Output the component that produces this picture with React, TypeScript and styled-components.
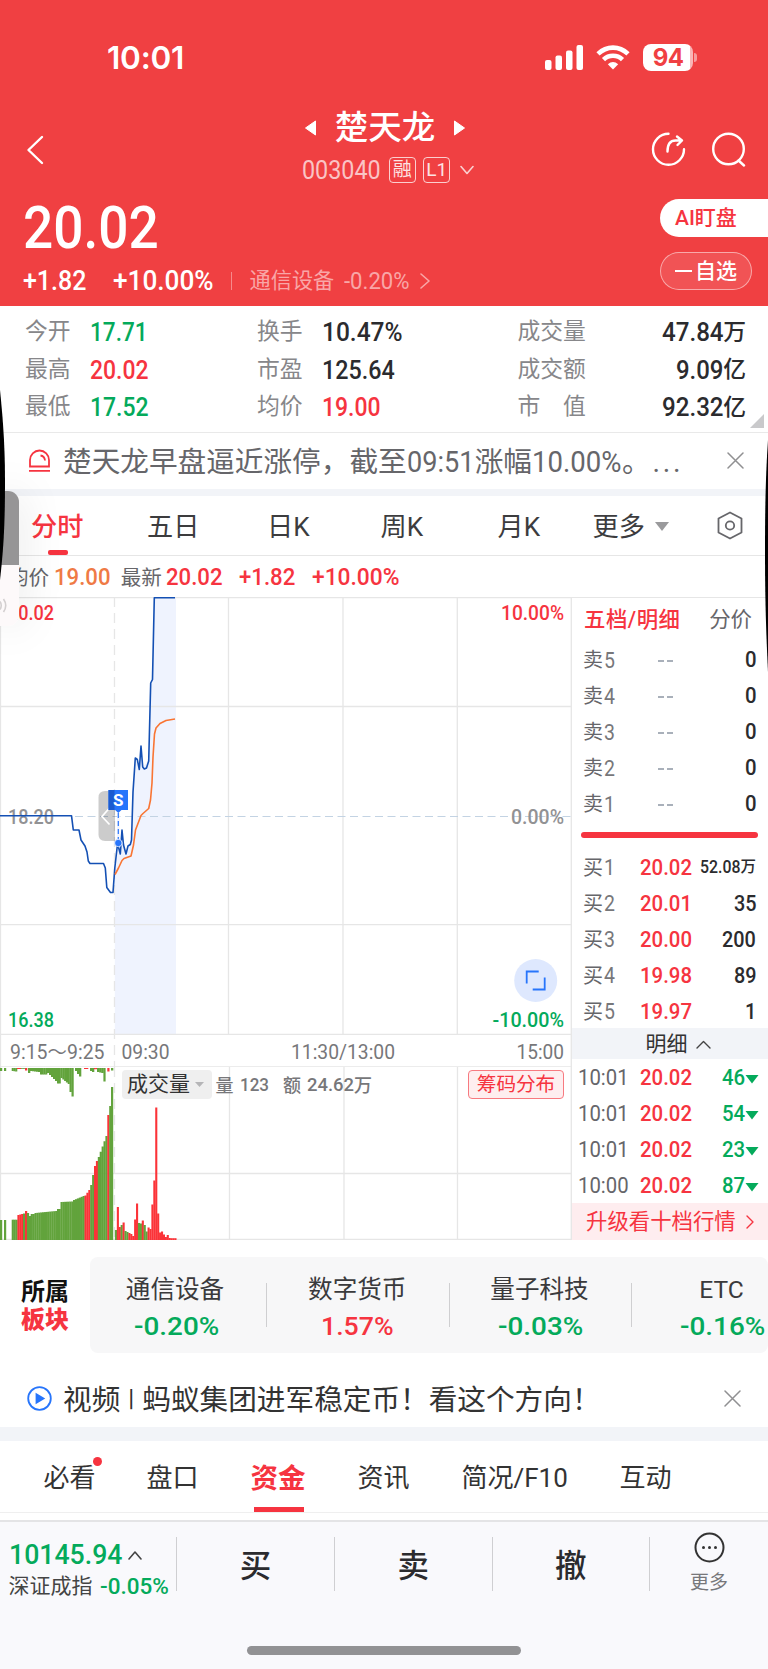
import React from "react";
import styled, { createGlobalStyle } from "styled-components";

const RED = "#f63440";
const GREEN = "#04aa5b";
const INK = "#2b2b2e";
const FONT = 'Roboto, "Noto Sans CJK SC", sans-serif';

const Global = createGlobalStyle`
  * { box-sizing: border-box; }
  body { margin: 0; background: #fff; font-family: ${FONT}; line-height: 1; }
  svg { display: block; flex: none; }
`;

/* ---------- condensed numerals ---------- */

const ADVANCE: Record<string, number> = { ".": 0.27, "%": 0.735, "+": 0.56, "-": 0.28, ":": 0.25 };
const advance = (t: string) => [...t].reduce((sum, c) => sum + (ADVANCE[c] ?? 0.5645), 0);

const NumBox = styled.span<{ $w: number; $size: number; $c: string; $b: number }>`
  display: inline-block;
  flex: none;
  width: ${(p) => p.$w}px;
  height: ${(p) => p.$size}px;
  font-size: ${(p) => p.$size}px;
  line-height: ${(p) => p.$size}px;
  font-weight: ${(p) => p.$b};
  color: ${(p) => p.$c};
  white-space: nowrap;
`;
const NumInk = styled.span<{ $k: number }>`
  display: inline-block;
  transform: scaleX(${(p) => p.$k});
  transform-origin: 0 50%;
`;

function Num({ t, w, size, c = INK, b = 500 }: { t: string; w: number; size: number; c?: string; b?: number }) {
  return (
    <NumBox $w={w} $size={size} $c={c} $b={b}>
      <NumInk $k={w / (advance(t) * size)}>{t}</NumInk>
    </NumBox>
  );
}

/* ---------- page and header ---------- */

const Page = styled.div`
  position: relative;
  width: 768px;
  height: 1669px;
  overflow: hidden;
  background: #fff;
  display: flex;
  flex-direction: column;
`;
const Header = styled.header`
  height: 306px;
  flex: none;
  background: #f04042;
  color: #fff;
`;
const StatusBar = styled.div`
  height: 106px;
  padding: 8px 71px 0 107px;
  display: flex;
  align-items: center;
  justify-content: space-between;
`;
const Clock = styled.span`
  padding-top: 1px;
  font: 600 31.5px/1 Inter, sans-serif;
  letter-spacing: -0.2px;
`;
const StatusIcons = styled.div`
  display: flex;
  align-items: center;
  gap: 13px;
`;
const Battery = styled.div`
  display: flex;
  align-items: center;
  gap: 1px;
  &::after {
    content: "";
    width: 3px;
    height: 9px;
    border-radius: 0 4px 4px 0;
    background: #f79b9c;
  }
`;
const BatteryLevel = styled.span`
  width: 50px;
  height: 27px;
  border-radius: 8px;
  background: linear-gradient(90deg, #fff 47px, #f9b5b6 47px);
  color: #f04042;
  font: 700 24px/27px Inter, sans-serif;
  letter-spacing: -0.6px;
  text-align: center;
`;
const NavBar = styled.div`
  height: 87px;
  padding: 0 22.5px 0 25.5px;
  display: grid;
  grid-template-columns: 100px 1fr 100px;
  align-items: center;
`;
const NavTitle = styled.div`
  display: flex;
  flex-direction: column;
`;
const NameRow = styled.div`
  height: 42px;
  padding: 0 1px 1px 0;
  display: flex;
  align-items: center;
  justify-content: center;
  gap: 19px;
`;
const StockName = styled.h1`
  margin: 0;
  font-size: 33.5px;
  font-weight: 500;
  line-height: 40px;
`;
const CodeRow = styled.div`
  height: 42px;
  padding: 0 0 1px 5px;
  display: flex;
  align-items: center;
  justify-content: center;
`;
const Tag = styled.span<{ $ml: number }>`
  width: 27px;
  height: 26px;
  margin-left: ${(p) => p.$ml}px;
  border: 1.5px solid rgba(255, 255, 255, 0.75);
  border-radius: 4px;
  font-size: 19px;
  line-height: 24px;
  text-align: center;
  color: #fde3e3;
`;
const NavActions = styled.div`
  display: flex;
  justify-content: flex-end;
  gap: 26px;
`;
const Quote = styled.div`
  display: flex;
  justify-content: space-between;
`;
const QuoteMain = styled.div`
  padding-left: 22.5px;
`;
const PriceRow = styled.div`
  height: 70px;
  display: flex;
  align-items: center;
`;
const ChangeRow = styled.div`
  height: 36px;
  display: flex;
  align-items: center;
`;
const ChangeGap = styled.span`
  width: 27px;
`;
const Sector = styled.div`
  margin-left: 18px;
  padding-left: 18px;
  display: flex;
  align-items: center;
  gap: 10px;
  font-size: 21.2px;
  color: #f9a6a7;
  border-left: 1.5px solid #f68a8b;
  height: 18px;
`;
const QuoteActions = styled.div`
  width: 108px;
  padding-top: 6px;
  display: flex;
  flex-direction: column;
  gap: 15px;
`;
const WatchAi = styled.button`
  height: 38px;
  padding: 0 0 0 15px;
  border: 0;
  border-radius: 19px 0 0 19px;
  background: #fff;
  color: ${RED};
  font: 500 21px/38px ${FONT};
  text-align: left;
`;
const FavButton = styled.button`
  width: 92px;
  height: 38px;
  padding: 0 0 0 14px;
  border: 1px solid rgba(255, 255, 255, 0.5);
  border-radius: 19px;
  background: rgba(255, 255, 255, 0.1);
  color: #fff;
  font: 500 21px/37px ${FONT};
  display: flex;
  align-items: center;
  gap: 3px;
  &::before {
    content: "";
    width: 17px;
    height: 2.5px;
    background: #fff;
  }
`;

/* ---------- statistics ---------- */

const Stats = styled.section`
  position: relative;
  height: 126.5px;
  padding: 7.5px 22px 0 25px;
  border-bottom: 1.5px solid #e9e9e9;
  flex: none;
`;
const StatRow = styled.div`
  height: 37.6px;
  display: grid;
  grid-template-columns: 64.5px 167.5px 64.5px 196px 70px 1fr;
  align-items: center;
  font-size: 22.8px;
  color: #87878a;
`;
const StatLabel = styled.span`
  line-height: 24px;
`;
const StatNum = styled.span<{ $end?: boolean }>`
  display: flex;
  align-items: center;
  color: ${INK};
  font-weight: 500;
  ${(p) => p.$end && "justify-content: flex-end;"}
`;
const Unit = styled.span`
  padding-top: 2px;
`;
const Corner = styled.i`
  position: absolute;
  right: 4px;
  bottom: 4px;
  border: solid transparent;
  border-width: 0 0 14px 14px;
  border-bottom-color: #c9c9cb;
`;

/* ---------- banners ---------- */

const Banner = styled.div<{ $h: number; $c: string; $band: number; $pr: number }>`
  height: ${(p) => p.$h}px;
  flex: none;
  padding: 0 ${(p) => p.$pr}px 0 27px;
  display: flex;
  align-items: center;
  font-size: 28.65px;
  color: ${(p) => p.$c};
  border-bottom: ${(p) => p.$band}px solid #f2f4f8;
`;
const BannerText = styled.span`
  display: flex;
  align-items: center;
  margin: 3px auto 0 11px;
  white-space: pre;
`;
const Ellipsis = styled.span`
  letter-spacing: 2.6px;
  margin-left: 2px;
`;
const Bar = styled.span`
  font-size: 22px;
`;

/* ---------- chart tabs ---------- */

const ChartTabs = styled.nav`
  position: relative;
  height: 59.5px;
  flex: none;
  padding-left: 31px;
  border-bottom: 1.5px solid #e6e6e6;
  display: grid;
  grid-template-columns: 116px 120px 113.5px 117px 95px 124px 1fr;
  align-items: center;
  font-size: 26.2px;
  color: #3c3c3e;
`;
const ChartTab = styled.span<{ $on?: boolean }>`
  position: relative;
  height: 100%;
  padding-top: 3px;
  display: flex;
  align-items: center;
  gap: 10px;
  ${(p) =>
    p.$on &&
    `color: ${RED}; font-weight: 500;
    &::after { content: ""; position: absolute; left: 17px; bottom: 0; width: 20px; height: 5px; border-radius: 2px; background: ${RED}; }`}
`;
const InfoRow = styled.div`
  height: 41px;
  flex: none;
  padding: 4px 0 0 8px;
  display: flex;
  align-items: center;
  font-size: 20.6px;
  color: #66666a;
`;
const InfoGap = styled.span<{ $w: number }>`
  flex: none;
  width: ${(p) => p.$w}px;
`;

/* ---------- chart and order book ---------- */

const Market = styled.section`
  height: 643px;
  flex: none;
  display: grid;
  grid-template-columns: 572px 196px;
`;
const Charts = styled.div`
  position: relative;
`;
const VolumeSelect = styled.div`
  position: absolute;
  left: 122px;
  top: 473px;
  width: 90px;
  height: 29px;
  padding-left: 5px;
  border-radius: 4px;
  background: #efefef;
  display: flex;
  align-items: center;
  gap: 5px;
  font-size: 21px;
  color: #333;
`;
const ChipButton = styled.button`
  position: absolute;
  left: 468px;
  top: 473px;
  width: 96px;
  height: 29px;
  padding: 0;
  border: 1.5px solid #f77a80;
  border-radius: 4px;
  background: #feeeef;
  color: ${RED};
  font: 400 19.6px/28px ${FONT};
`;
const Book = styled.aside`
  display: flex;
  flex-direction: column;
  border-top: 1px solid #e6e6e6;
`;
const BookTabs = styled.div`
  height: 44px;
  flex: none;
  padding: 0 16px 0 12px;
  display: flex;
  align-items: center;
  justify-content: space-between;
  font-size: 21.4px;
  color: #66666a;
  b { color: ${RED}; font-weight: 500; letter-spacing: 0.5px; }
`;
const BookRow = styled.div`
  height: 36px;
  flex: none;
  padding: 1px 12px 0 11px;
  display: grid;
  grid-template-columns: 56.5px 50px 1fr;
  align-items: center;
  font-size: 20px;
  color: #66666a;
`;
const Level = styled.span`
  display: flex;
  align-items: center;
  gap: 1px;
`;
const Dashes = styled.span`
  display: flex;
  gap: 2.5px;
  padding: 1px 0 0 18px;
  &::before, &::after {
    content: "";
    width: 6.5px;
    height: 2px;
    background: #a9b0ba;
  }
`;
const Right = styled.span`
  display: flex;
  align-items: center;
  justify-content: flex-end;
  color: ${INK};
  font-size: 15.5px;
  font-weight: 500;
  svg { margin-top: 2px; }
`;
const Ratio = styled.div`
  height: 6px;
  margin: 10px 10px 11.5px 9px;
  border-radius: 3px;
  background: ${RED};
  flex: none;
`;
const DetailHead = styled.div`
  height: 31px;
  flex: none;
  margin-top: -1px;
  padding: 1px 0 0 16px;
  background: #f2f4f8;
  display: flex;
  align-items: center;
  justify-content: center;
  gap: 8px;
  font-size: 21px;
  color: #333;
`;
const TradeRow = styled.div`
  height: 36px;
  flex: none;
  padding: 2px 9px 0 6px;
  display: grid;
  grid-template-columns: 62px 52px 1fr;
  align-items: center;
`;
const Upgrade = styled.div`
  flex: 1;
  padding: 1px 0 0 14px;
  background: #feedef;
  display: flex;
  align-items: center;
  gap: 10px;
  font-size: 21.4px;
  color: ${RED};
`;

/* ---------- sectors ---------- */

const Sectors = styled.section`
  height: 131px;
  flex: none;
  padding: 17px 0 17.5px 21px;
  display: flex;
`;
const SectorsLabel = styled.div`
  width: 69px;
  padding-top: 21px;
  font-size: 24px;
  font-weight: 700;
  line-height: 28px;
  color: #111;
  b { display: block; color: ${RED}; }
`;
const SectorStrip = styled.div`
  flex: 1;
  overflow: hidden;
  border-radius: 8px;
  background: #f7f7f8;
  display: flex;
`;
const SectorCell = styled.div<{ $w: number }>`
  position: relative;
  flex: none;
  width: ${(p) => p.$w}px;
  padding: 21px 2px 0 0;
  display: flex;
  flex-direction: column;
  align-items: center;
  gap: 10.5px;
  font-size: 24.6px;
  color: #3a3a3c;
  &:first-child { padding-right: 7px; }
  &:not(:last-child)::after {
    content: "";
    position: absolute;
    right: 0;
    top: 26px;
    width: 1px;
    height: 44px;
    background: #cfcfd1;
  }
`;

/* ---------- page tabs and bottom bar ---------- */

const PageTabs = styled.nav`
  height: 72px;
  flex: none;
  padding-left: 43.5px;
  display: flex;
  align-items: center;
  font-size: 26px;
  color: #333;
  border-bottom: 1.5px solid #efefef;
`;
const PageTab = styled.span<{ $w: number; $on?: boolean; $dot?: boolean }>`
  position: relative;
  width: ${(p) => p.$w}px;
  line-height: 77px;
  height: 72px;
  white-space: nowrap;
  ${(p) =>
    p.$on &&
    `color: ${RED}; font-weight: 700; font-size: 27.6px;
    &::after { content: ""; position: absolute; left: 3px; bottom: 0; width: 50px; height: 5px; background: ${RED}; }`}
  ${(p) =>
    p.$dot &&
    `&::after { content: ""; position: absolute; left: 49px; top: 16.5px; width: 9px; height: 9px; border-radius: 50%; background: ${RED}; }`}
`;
const Footer = styled.footer`
  margin-top: 7px;
  flex: 1;
  background: #f9f9fc;
  border-top: 2px solid #e4e4e6;
  display: flex;
  flex-direction: column;
  align-items: center;
`;
const Actions = styled.div`
  width: 100%;
  height: 124px;
  display: grid;
  grid-template-columns: 176px 158px 157.5px 157.5px 119px;
`;
const IndexCell = styled.div`
  padding: 19px 0 0 8.5px;
`;
const IndexLine = styled.div<{ $h: number; $pt?: number }>`
  height: ${(p) => p.$h}px;
  padding-top: ${(p) => p.$pt ?? 0}px;
  display: flex;
  align-items: center;
  gap: 7px;
  font-size: 21px;
  color: #444;
`;
const TradeCell = styled.div`
  height: 54px;
  margin-top: 15px;
  border-left: 1.5px solid #cfcfd2;
  font-size: 31.5px;
  font-weight: 500;
  line-height: 59px;
  text-align: center;
  color: ${INK};
`;
const MoreCell = styled.div`
  height: 54px;
  margin-top: 15px;
  border-left: 1.5px solid #cfcfd2;
  display: flex;
  flex-direction: column;
  align-items: center;
  gap: 10px;
  font-size: 19px;
  color: #77777a;
  svg { margin-top: -5px; }
`;
const HomeIndicator = styled.div`
  width: 274px;
  height: 9px;
  border-radius: 5px;
  background: #929294;
`;

/* ---------- floating side pieces ---------- */

const SideWidget = styled.div`
  position: absolute;
  left: 0;
  top: 491px;
  width: 18.5px;
  height: 135px;
  border-radius: 0 11px 11px 0;
  background: linear-gradient(#969596 74px, #fdf9fa 74px);
  box-shadow: 0 0 44px rgba(0, 0, 0, 0.13);
`;
const EdgeShade = styled.svg<{ $side: "left" | "right" }>`
  position: absolute;
  top: 380px;
  ${(p) => p.$side}: 0;
`;

/* ---------- chart drawing ---------- */

type ChartTextProps = { x: number; y: number; w: number; t: string; c: string; b?: number };
const ChartText = ({ x, y, w, t, c, b = 500 }: ChartTextProps) => (
  <text x={x} y={y} textLength={w} lengthAdjust="spacingAndGlyphs" fill={c} fontSize={19.5} fontWeight={b} fontFamily={FONT}>
    {t}
  </text>
);

const PRICE =
  "0,218.7 71.5,218.7 73.3,233 79,233 81,243 85,249 87,255 88.3,264 90,266.5 103.5,266.5 105.3,271 106.8,290.5 110.5,295.5 113,295.5 114.8,271 117.5,247 119,252 120.3,257 122,233 123.5,248 126,257 128,249 130.3,247.5 131.5,243 133,195 135.3,161 137.3,162.5 139.3,172.5 141,149 142.7,170 144.3,172 146.5,171 148.7,164 150.7,86 152.5,82.5 154.3,0.8 175,0.8";
const AREA =
  "114.8,437 114.8,271 117.5,247 120.3,257 122,233 126,257 130.3,247.5 131.5,243 133,195 135.3,161 139.3,172.5 141,149 142.7,170 148.7,164 150.7,86 152.5,82.5 154.3,0.8 176,0.8 176,437";
const AVERAGE =
  "115,277.5 118.5,271 122,263.5 124,261.5 131,259 133.5,248 135.5,233 141,218.5 143,216.5 148.7,211.5 150.5,203 152,186 153,160 154.5,137 156,131 160,126.5 166,123.5 175,122";

function PriceChart() {
  return (
    <svg width="572" height="470" viewBox="0 0 572 470">
      <polygon points={AREA} fill="#eff3fe" />
      <g stroke="#e6e6e6" strokeWidth="1.3">
        <path d="M0 .6H572M0 109.5H571M0 327.7H571M0 437.400H571M0 470H571M.5 0V470M228.5 0V437M343 0V437M457.3 0V437M571.3 0V470" />
        <path d="M114.5 0V470" strokeDasharray="10 6" />
      </g>
      <path d="M75 219.5H571" stroke="#c3d3e3" strokeWidth="1.2" strokeDasharray="8 4.5" />
      <ChartText x={8} y={23} w={46} t="20.02" c={RED} />
      <ChartText x={501} y={23} w={63} t="10.00%" c={RED} />
      <ChartText x={8} y={226.5} w={46} t="18.20" c="#929294" />
      <ChartText x={511} y={226.5} w={53} t="0.00%" c="#929294" />
      <ChartText x={8} y={429.5} w={46} t="16.38" c={GREEN} />
      <ChartText x={492.5} y={429.5} w={71.5} t="-10.00%" c={GREEN} />
      <ChartText x={10} y={461.5} w={94.5} t="9:15～9:25" c="#77777a" b={400} />
      <ChartText x={121.5} y={461.5} w={48} t="09:30" c="#77777a" b={400} />
      <ChartText x={291} y={461.5} w={104} t="11:30/13:00" c="#77777a" b={400} />
      <ChartText x={516.5} y={461.5} w={47.5} t="15:00" c="#77777a" b={400} />
      <path d="M115 194H105q-6.500 0-6.500 6.500v37q0 6.500 6.500 6.500h10z" fill="#000" opacity=".2" />
      <path d="M109.500 211l-7.500 8.500 7.500 8" fill="none" stroke="#fff" strokeWidth="1.700" />
      <polyline points={PRICE} fill="none" stroke="#1450b4" strokeWidth="1.6" strokeLinejoin="round" />
      <polyline points={AVERAGE} fill="none" stroke="#f97533" strokeWidth="1.6" strokeLinejoin="round" />
      <path d="M118.300 216v26" stroke="#eff3fe" strokeWidth="2.500" />
      <path d="M118.300 216v26" stroke="#2775fb" strokeWidth="1.200" strokeDasharray="5 3" />
      <path d="M108.500 193h19.500v20h-6.500l-3.200 3-3.200-3h-6.600z" fill="#2775fb" />
      <path d="M108.500 193h6v20h-6z" fill="#1b5bd0" />
      <text x="118.3" y="209" textAnchor="middle" fill="#fff" fontSize="17" fontWeight="700" fontFamily={FONT}>S</text>
      <circle cx="118.300" cy="246" r="3.700" fill="#2775fb" stroke="#eff3fe" strokeWidth=".8" />
      <circle cx="535.700" cy="383.500" r="21.500" fill="#dee8fe" />
      <path d="M526.700 386.500v-12h12M544.700 380.500v12h-12" fill="none" stroke="#2775fb" strokeWidth="1.800" />
    </svg>
  );
}

type Run = [from: number, to: number, startH: number, endH: number, red?: boolean];

const AUCTION: Run[] = [
  [0, 1.9, 20, 20], [4, 5.9, 20, 20], [11.7, 17.4, 20.3, 20.3], [17.4, 23, 25, 26, true], [23, 25, 26.5, 26.5],
  [25, 26.9, 29, 29, true], [26.9, 28.8, 27, 27], [28.8, 30.7, 24, 24], [30.7, 34.5, 26, 26], [34.5, 57, 27, 29],
  [57, 60.5, 31, 31], [60.5, 73, 38, 38.5], [73, 84.5, 40, 44], [84.5, 90.2, 44.5, 50, true],
  [90.2, 94, 55, 65], [94, 97.8, 74, 79, true], [97.8, 107.3, 83, 104], [107.3, 109.2, 125, 125, true],
  [109.2, 111, 134, 134], [111, 112.9, 153, 153],
];
const IMBALANCE: Run[] = [
  [0, 1.9, 3, 3], [4, 5.9, 3, 3], [11.7, 17, 3, 3.5], [17, 21, 1, 1, true], [25, 27, 2.5, 2.5, true], [21, 25, 0.8, 0.8],
  [28, 30, 5, 5], [30, 40, 3, 4], [40, 47, 6.5, 6.5], [47, 57, 5, 13], [57, 60.5, 15.5, 15.5], [60.5, 69.5, 10, 16],
  [69.5, 71.5, 24, 24], [71.5, 73.4, 28.5, 28.5], [75, 77, 3, 3], [77, 81, 6, 8.5], [84, 88, 1, 1, true],
  [90, 94, 3, 4], [94, 97, 1.2, 1.2, true], [97, 103.4, 4, 5], [103.4, 105.3, 13.5, 13.5], [107.3, 109.2, 3.5, 3.5, true], [111, 113, 2.5, 2.5],
];
const SESSION: [h: number, red: number][] = [
  [10, 0], [33, 1], [13, 1], [15, 0], [17.5, 1], [9, 0], [8, 0], [7, 1], [6, 1], [4, 1], [20.5, 1], [36.5, 1], [17, 0], [16.5, 0],
  [19.5, 1], [15, 0], [8.5, 0], [12.5, 1], [11, 1], [35.5, 1], [59.5, 1], [132.5, 1], [26.5, 1], [7.5, 1], [8.5, 1],
  [5.5, 1], [3, 1], [5, 1], [2, 1], [1.8, 1], [1.8, 1], [1.8, 1],
];

const BAR_GREEN = "#62a33c";
const BAR_RED = "#fb3338";

const toBars = (runs: Run[], base: number, up: boolean) =>
  runs.flatMap(([from, to, h0, h1, red], r) => {
    const n = Math.max(1, Math.round((to - from) / 1.92));
    const step = (to - from) / n;
    return Array.from({ length: n }, (_, i) => {
      const h = n === 1 ? h0 : h0 + ((h1 - h0) * i) / (n - 1);
      return <rect key={`${r}-${i}`} x={from + i * step} y={up ? base - h : base} width={step + 0.3} height={h} fill={red ? BAR_RED : BAR_GREEN} />;
    });
  });

function VolumeChart() {
  return (
    <svg width="572" height="173" viewBox="0 0 572 173">
      <g stroke="#e6e6e6" strokeWidth="1.3">
        <path d="M0 106.500H571M0 172.400H571M.5 0V173M229.500 0V173M344 0V173M457.500 0V173M571.300 0V173" />
        <path d="M114.500 0V173" strokeDasharray="10 6" />
      </g>
      {toBars(IMBALANCE, 1, false)}
      {toBars(AUCTION, 173, true)}
      {SESSION.map(([h, red], i) => (
        <rect key={i} x={114.9 + i * 1.92} y={173 - h} width={2.1} height={h} fill={red ? BAR_RED : BAR_GREEN} />
      ))}
      <g fill="#77777a" fontSize="18" fontWeight="500" fontFamily={FONT}>
        <text x="215.500" y="24.500">量</text>
        <text x="240" y="24" textLength="29" lengthAdjust="spacingAndGlyphs">123</text>
        <text x="283" y="24.500">额</text>
        <text x="307" y="24" textLength="47" lengthAdjust="spacingAndGlyphs">24.62</text>
        <text x="354" y="24.500">万</text>
      </g>
    </svg>
  );
}

/* ---------- small drawings ---------- */

const Chevron = ({ d, w, h, c, s = 1.6 }: { d: string; w: number; h: number; c: string; s?: number }) => (
  <svg width={w} height={h} viewBox={`0 0 ${w} ${h}`} fill="none" stroke={c} strokeWidth={s}>
    <path d={d} strokeLinecap="round" strokeLinejoin="round" />
  </svg>
);
const Close = () => <Chevron w={17} h={17} c="#909092" s={1.5} d="M1 1l15 15M16 1L1 16" />;

const STATS: { l: string; v: string; w: number; c?: string }[][] = [
  [{ l: "今开", v: "17.71", w: 57, c: GREEN }, { l: "换手", v: "10.47%", w: 80 }, { l: "成交量", v: "47.84", w: 61 }],
  [{ l: "最高", v: "20.02", w: 58, c: RED }, { l: "市盈", v: "125.64", w: 72 }, { l: "成交额", v: "9.09", w: 47 }],
  [{ l: "最低", v: "17.52", w: 58, c: GREEN }, { l: "均价", v: "19.00", w: 58, c: RED }, { l: "市　值", v: "92.32", w: 61 }],
];
const BUYS = [
  ["1", "20.02", "52.08"],
  ["2", "20.01", "35"],
  ["3", "20.00", "200"],
  ["4", "19.98", "89"],
  ["5", "19.97", "1"],
];
const TRADES = [["10:01", "46"], ["10:01", "54"], ["10:01", "23"], ["10:00", "87"]];
const SECTORS: [string, string, number, number][] = [
  ["通信设备", "-0.20%", 83, 177],
  ["数字货币", "1.57%", 72, 182.5],
  ["量子科技", "-0.03%", 83, 182],
  ["ETC", "-0.16%", 83, 182],
];

export default function App() {
  return (
    <Page>
      <Global />
      <Header>
        <StatusBar>
          <Clock>10:01</Clock>
          <StatusIcons>
            <svg width="38" height="25" fill="#fff">
              <rect y="15" width="6.500" height="10" rx="2" /><rect x="10.500" y="10.500" width="6.500" height="14.500" rx="2" />
              <rect x="21" y="5.500" width="6.500" height="19.500" rx="2" /><rect x="31.500" width="6.500" height="25" rx="2" />
            </svg>
            <svg width="34" height="25" viewBox="0 0 34 25" fill="none" stroke="#fff" strokeWidth="4.600">
              <path d="M2 8.800Q8.500 2.600 17 2.600T32 8.800" /><path d="M7.500 14.600Q11.500 10.800 17 10.800t9.500 3.800" />
              <path d="M17 24.500l-5.200-5.300q5.200-4.300 10.400 0z" fill="#fff" stroke="none" />
            </svg>
            <Battery><BatteryLevel>94</BatteryLevel></Battery>
          </StatusIcons>
        </StatusBar>
        <NavBar>
          <Chevron w={18} h={30} c="#fff" s={2.4} d="M16 2L2.500 15L16 28" />
          <NavTitle>
            <NameRow>
              <svg width="11" height="16"><path d="M10.500 1v14L.5 8z" fill="#fff" stroke="#fff" strokeLinejoin="round" /></svg>
              <StockName>楚天龙</StockName>
              <svg width="11" height="16"><path d="M.5 1v14l10-7z" fill="#fff" stroke="#fff" strokeLinejoin="round" /></svg>
            </NameRow>
            <CodeRow>
              <Num t="003040" w={79} size={25} c="#fac4c5" b={400} />
              <Tag $ml={8}>融</Tag>
              <Tag $ml={7.5}>L1</Tag>
              <InfoGap $w={10} />
              <Chevron w={14} h={10} c="#fbd0d0" d="M1 1.500l6 7 6-7" />
            </CodeRow>
          </NavTitle>
          <NavActions>
            <svg width="35" height="35" viewBox="0 0 35 35" fill="none" stroke="#fff" strokeWidth="2.400" strokeLinecap="round" strokeLinejoin="round">
              <path d="M17.500 1.800A15.500 15.500 0 1 0 33 17.300" /><path d="M16.500 19.500c0-7.500 3-11 8-11h6M26 4.500l5 4-4.500 4.500" />
            </svg>
            <svg width="34" height="35" viewBox="0 0 34 35" fill="none" stroke="#fff" strokeWidth="2.400" strokeLinecap="round">
              <circle cx="16.500" cy="17" r="15.300" /><path d="M26.500 28.500l5.500 5" />
            </svg>
          </NavActions>
        </NavBar>
        <Quote>
          <QuoteMain>
            <PriceRow><Num t="20.02" w={134.5} size={58.5} c="#fff" /></PriceRow>
            <ChangeRow>
              <Num t="+1.82" w={63} size={27} c="#fff" />
              <ChangeGap />
              <Num t="+10.00%" w={100} size={27} c="#fff" />
              <Sector>
                通信设备
                <Num t="-0.20%" w={66} size={23} c="#f9a6a7" b={400} />
                <Chevron w={10} h={16} c="#f9a6a7" d="M1 1l8 7-8 7" />
              </Sector>
            </ChangeRow>
          </QuoteMain>
          <QuoteActions>
            <WatchAi>AI盯盘</WatchAi>
            <FavButton>自选</FavButton>
          </QuoteActions>
        </Quote>
      </Header>

      <Stats>
        {STATS.map((row, r) => (
          <StatRow key={r}>
            {row.map((s, i) => (
              <React.Fragment key={s.l}>
                <StatLabel>{s.l}</StatLabel>
                <StatNum $end={i === 2}>
                  <Num t={s.v} w={s.w} size={26} c={s.c} />
                  {i === 2 && <Unit>{r === 0 ? "万" : "亿"}</Unit>}
                </StatNum>
              </React.Fragment>
            ))}
          </StatRow>
        ))}
        <Corner />
      </Stats>

      <Banner $h={63.5} $c="#66666a" $band={7} $pr={24}>
        <svg width="25" height="23" fill="none" stroke={RED} strokeWidth="1.800">
          <path d="M3 17.500V11a9.500 9.500 0 0 1 19 0v6.500zM2 21.800h21M13.500 6.500q4 .5 4.500 5" />
        </svg>
        <BannerText>
          楚天龙早盘逼近涨停，截至
          <Num t="09:51" w={68} size={30} c="#66666a" b={400} />
          涨幅
          <Num t="10.00%" w={90} size={30} c="#66666a" b={400} />
          。<Ellipsis>...</Ellipsis>
        </BannerText>
        <Close />
      </Banner>

      <ChartTabs>
        <ChartTab $on>分时</ChartTab>
        <ChartTab>五日</ChartTab>
        <ChartTab>日K</ChartTab>
        <ChartTab>周K</ChartTab>
        <ChartTab>月K</ChartTab>
        <ChartTab>更多<svg width="14" height="9"><path d="M0 0h14L7 9z" fill="#9a9a9c" /></svg></ChartTab>
        <svg width="26" height="29" viewBox="0 0 26 29" fill="none" stroke="#66666a" strokeWidth="1.800" strokeLinejoin="round">
          <path d="M13 1.500L24.500 7.500V21.500L13 27.500L1.500 21.500V7.500z" /><circle cx="13" cy="14.500" r="4.200" />
        </svg>
      </ChartTabs>
      <InfoRow>
        均价<InfoGap $w={4.5} />
        <Num t="19.00" w={56} size={23.5} c="#ef7a45" />
        <InfoGap $w={11} />最新<InfoGap $w={4.5} />
        <Num t="20.02" w={56} size={23.5} c={RED} />
        <InfoGap $w={16.5} />
        <Num t="+1.82" w={56} size={23.5} c={RED} />
        <InfoGap $w={17} />
        <Num t="+10.00%" w={87} size={23.5} c={RED} />
      </InfoRow>

      <Market>
        <Charts>
          <PriceChart />
          <VolumeChart />
          <VolumeSelect>
            成交量<svg width="9" height="5"><path d="M0 0h9L4.500 5z" fill="#b5b5b7" /></svg>
          </VolumeSelect>
          <ChipButton>筹码分布</ChipButton>
        </Charts>
        <Book>
          <BookTabs><b>五档/明细</b><span>分价</span></BookTabs>
          {["5", "4", "3", "2", "1"].map((n) => (
            <BookRow key={n}>
              <Level>卖<Num t={n} w={11} size={22.5} c="#77777a" b={400} /></Level>
              <Dashes />
              <Right><Num t="0" w={11.5} size={22} /></Right>
            </BookRow>
          ))}
          <Ratio />
          {BUYS.map(([n, price, qty], i) => (
            <BookRow key={n}>
              <Level>买<Num t={n} w={11} size={22.5} c="#77777a" b={400} /></Level>
              <Num t={price} w={51.5} size={22} c={RED} />
              <Right>
                {i === 0 ? <><Num t={qty} w={40} size={17.5} />万</> : <Num t={qty} w={qty.length * 11.2} size={22} />}
              </Right>
            </BookRow>
          ))}
          <DetailHead>明细<Chevron w={15} h={9} c="#444" s={1.4} d="M1 8l6.500-6.500L14 8" /></DetailHead>
          {TRADES.map(([time, qty], i) => (
            <TradeRow key={i}>
              <Num t={time} w={51} size={22} c="#66666a" b={400} />
              <Num t="20.02" w={51.5} size={22} c={RED} />
              <Right>
                <Num t={qty} w={23} size={22} c={GREEN} />
                <svg width="14" height="9"><path d="M.5 0h13L7 8.500z" fill={GREEN} /></svg>
              </Right>
            </TradeRow>
          ))}
          <Upgrade>升级看十档行情<Chevron w={8} h={14} c={RED} s={1.4} d="M1 1l6 6-6 6" /></Upgrade>
        </Book>
      </Market>

      <Sectors>
        <SectorsLabel>所属<b>板块</b></SectorsLabel>
        <SectorStrip>
          {SECTORS.map(([name, pct, w, cell]) => (
            <SectorCell key={name} $w={cell}>
              <span>{name}</span>
              <Num t={pct} w={w} size={26.5} c={pct.startsWith("-") ? GREEN : RED} />
            </SectorCell>
          ))}
        </SectorStrip>
      </Sectors>

      <Banner $h={70} $c="#333" $band={14} $pr={27}>
        <svg width="25" height="25" fill="none" stroke="#2775fb" strokeWidth="1.800">
          <circle cx="12.500" cy="12.500" r="11.300" /><path d="M9.500 8.300v8.400l7-4.200z" fill="#2775fb" />
        </svg>
        <BannerText>视频<Bar>丨</Bar>蚂蚁集团进军稳定币！看这个方向！</BannerText>
        <Close />
      </Banner>

      <PageTabs>
        <PageTab $w={103} $dot>必看</PageTab>
        <PageTab $w={104}>盘口</PageTab>
        <PageTab $w={107} $on>资金</PageTab>
        <PageTab $w={104}>资讯</PageTab>
        <PageTab $w={158}>简况/F10</PageTab>
        <PageTab $w={80}>互动</PageTab>
      </PageTabs>

      <Footer>
        <Actions>
          <IndexCell>
            <IndexLine $h={28}>
              <Num t="10145.94" w={112.5} size={28} c={GREEN} />
              <Chevron w={14} h={10} c="#444" d="M1 9l6-7 6 7" />
            </IndexLine>
            <IndexLine $h={35} $pt={1}>
              深证成指
              <Num t="-0.05%" w={67} size={22.5} c={GREEN} />
            </IndexLine>
          </IndexCell>
          <TradeCell>买</TradeCell>
          <TradeCell>卖</TradeCell>
          <TradeCell>撤</TradeCell>
          <MoreCell>
            <svg width="31" height="31" viewBox="0 0 31 31">
              <circle cx="15.500" cy="15.500" r="14" fill="none" stroke="#333" strokeWidth="2" />
              <g fill="#333"><circle cx="9.500" cy="15.500" r="1.500" /><circle cx="15.500" cy="15.500" r="1.500" /><circle cx="21.500" cy="15.500" r="1.500" /></g>
            </svg>
            更多
          </MoreCell>
        </Actions>
        <HomeIndicator />
      </Footer>

      <SideWidget>
        <svg width="12" height="135" fill="none" stroke="#d3cfd0" strokeWidth="1.600">
          <path d="M0 110.500q2.500 4 0 8M3.500 108q4.500 6.500 0 13" />
        </svg>
      </SideWidget>
      <EdgeShade $side="left" width="8" height="220">
        <path d="M0 10C2 30 5 60 5 100S4 165 0 200z" fill="#000" />
      </EdgeShade>
      <EdgeShade $side="right" width="8" height="300">
        <path d="M8 60C6 90 5 120 5 170S6 250 8 292z" fill="#000" />
      </EdgeShade>
    </Page>
  );
}
